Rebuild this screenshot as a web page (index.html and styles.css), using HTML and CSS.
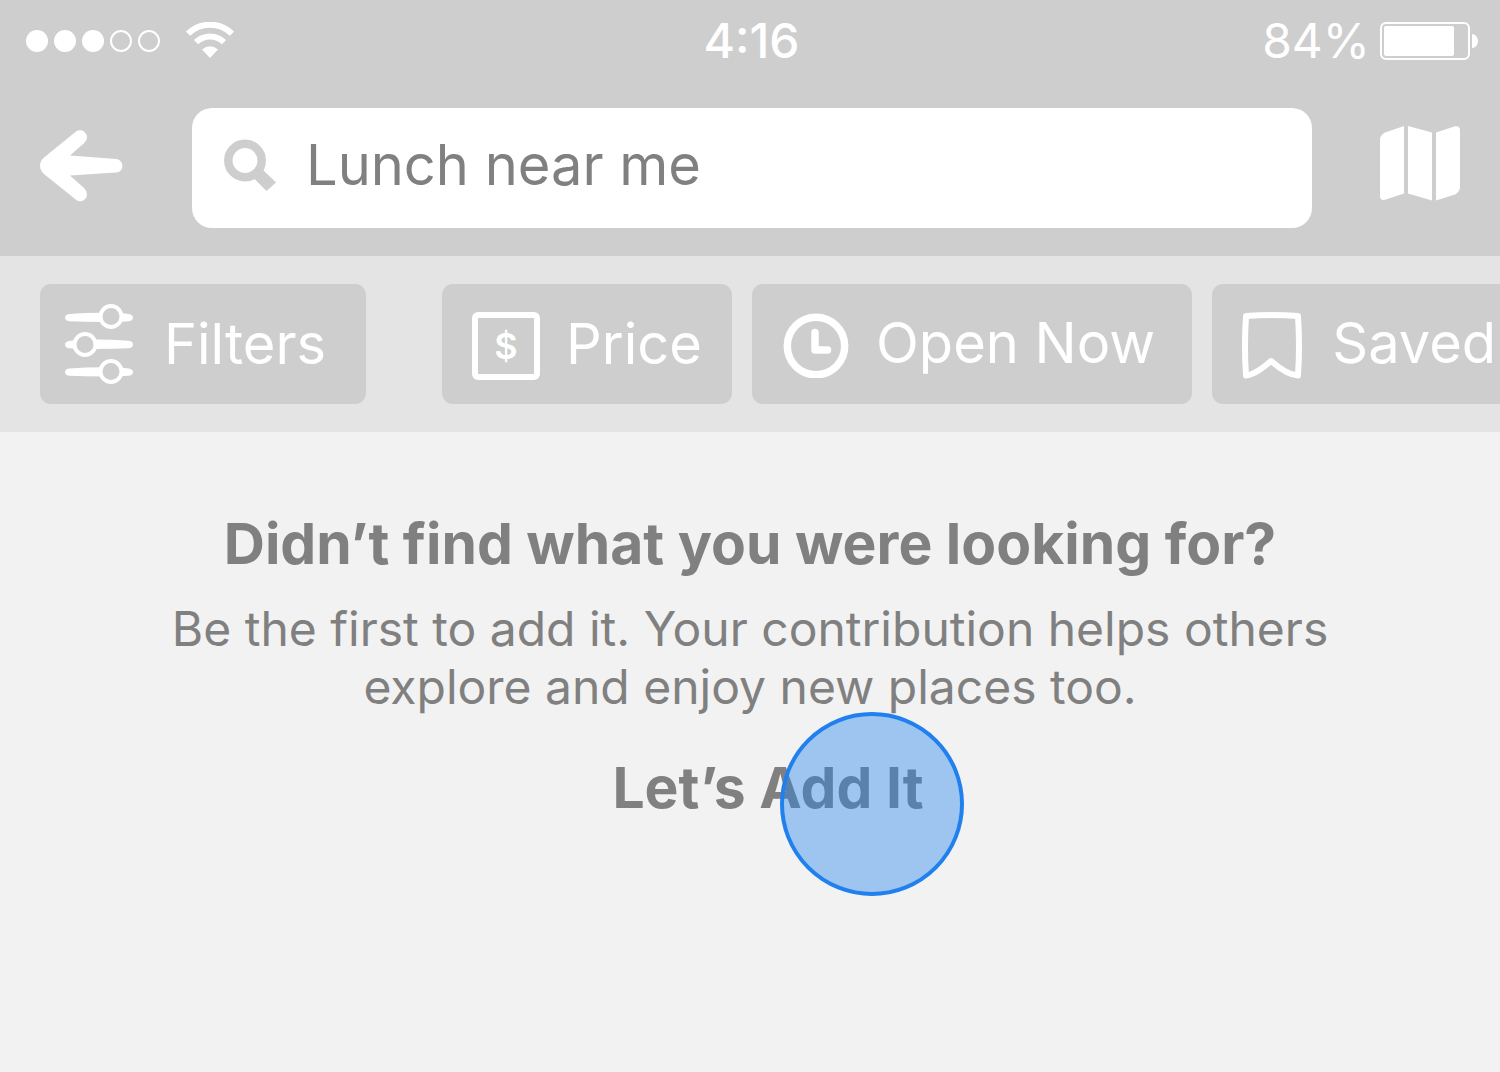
FILE: index.html
```html
<!DOCTYPE html>
<html lang="en">
<head>
<meta charset="utf-8">
<meta name="viewport" content="width=device-width, initial-scale=1">
<title>Lunch near me</title>
<link rel="stylesheet" href="styles.css">
</head>
<body>
<header class="header">
  <div class="status">
    <div class="status-side">
      <svg class="signal" width="136" height="24" viewBox="0 0 136 24" role="img" aria-label="Signal">
        <g fill="#fff"><circle cx="12" cy="12" r="11"/><circle cx="40" cy="12" r="11"/><circle cx="68" cy="12" r="11"/></g>
        <g fill="none" stroke="#fff" stroke-width="2"><circle cx="96" cy="12" r="10"/><circle cx="124" cy="12" r="10"/></g>
      </svg>
      <svg width="48" height="38" viewBox="0 0 48 38" role="img" aria-label="Wi-Fi">
        <g fill="none" stroke="#fff" stroke-width="6">
          <path d="M2 11.700A31.500 31.500 0 0 1 46 11.700"/>
          <path d="M10 20.200A20 20 0 0 1 38 20.200"/>
        </g>
        <path fill="#fff" d="M16 27.500Q24 21 32 27.500L24 36z"/>
      </svg>
    </div>
    <div class="clock">4:16</div>
    <div class="status-side status-end">
      <span>84%</span>
      <svg width="98" height="38" viewBox="0 0 98 38" role="img" aria-label="Battery">
        <rect x="1" y="1" width="88" height="36" rx="5" fill="none" stroke="#fff" stroke-width="2"/>
        <rect x="4" y="4" width="70" height="30" rx="2" fill="#fff"/>
        <path fill="#fff" d="M92 12a6 7 0 0 1 0 14z"/>
      </svg>
    </div>
  </div>
  <div class="nav">
    <button class="icon-button" type="button" aria-label="Back">
      <svg width="84" height="76" viewBox="0 -4 84 76"><path fill="#fff" d="M36 1.500C40-1.500 47 1 47 7.500Q47 10.500 44.500 12.700L30 25.500L76 29C84.500 30 84.500 42 76 42.500L30 45.500L44.500 58.500Q47 61 47 64.500C46.500 71 40 73 36 69.800L4 44Q0 40.500 0 35.500Q0 31 4 27.500z"/></svg>
    </button>
    <label class="search">
      <svg width="52" height="52" viewBox="0 0 52 52" aria-hidden="true"><circle cx="21" cy="21.500" r="16.700" fill="none" stroke="#cecece" stroke-width="8.500"/><path fill="#cecece" d="M39 31L52 43.500L42.500 52L29.500 39z"/></svg>
      <input class="search-input" type="text" value="Lunch near me" aria-label="Search">
    </label>
    <button class="icon-button" type="button" aria-label="Map">
      <svg width="80" height="76" viewBox="0 1 80 76"><path fill="#fff" d="M24 1V68.500L5 74.800Q0 75.500 0 71V15Q0 10 5 7.500zM28 1L52 7.500V75.500L28 68.500zM56 7.500L75 1.300Q80 .5 80 5V62Q80 67 75 69.500L56 75.500z"/></svg>
    </button>
  </div>
</header>
<nav class="chips" aria-label="Filters">
  <button class="chip chip-main" type="button">
    <svg width="68" height="80" viewBox="0 0 68 80" aria-hidden="true">
      <g fill="#fff"><path id="line" d="M4 10Q20 8.700 38 8.700H52L64 10Q68 11 68 13.500Q68 16.500 64 17.300L50 18H38Q20 18 4 17.300Q0 16.500 0 13.500Q0 10.700 4 10z"/><path d="M64 36.700Q48 35.500 30 35.500H16L4 37Q0 38 0 40.500Q0 43.500 4 44.300L18 45H30Q48 45 64 44.300Q68 43.500 68 40.500Q68 37.500 64 36.700z"/><use href="#line" y="54.500"/></g>
      <g fill="#cecece" stroke="#fff" stroke-width="4"><circle cx="46" cy="12.500" r="10.500"/><circle cx="20" cy="40.500" r="10.500"/><circle cx="46" cy="67.500" r="10.500"/></g>
    </svg>
    <span>Filters</span>
  </button>
  <button class="chip chip-price" type="button">
    <span class="price-icon" aria-hidden="true">$</span>
    <span>Price</span>
  </button>
  <button class="chip chip-open" type="button">
    <svg width="68" height="68" viewBox="0 0 68 68" aria-hidden="true"><g fill="none" stroke="#fff"><circle cx="34" cy="36" r="28.700" stroke-width="7.500"/><path d="M33 22.500V40H45.500" stroke-width="7.500" stroke-linecap="round" stroke-linejoin="round"/></g></svg>
    <span class="chip-label">Open Now</span>
  </button>
  <button class="chip chip-saved" type="button">
    <svg width="60" height="72" viewBox="0 -4 60 72" aria-hidden="true"><path fill="none" stroke="#fff" stroke-width="6" stroke-linejoin="round" d="M4 4Q30 2 56 4Q58 34 56 63.500Q45 63 29 49Q13 63 4 63.500Q2 34 4 4z"/></svg>
    <span class="chip-label">Saved</span>
  </button>
</nav>
<main class="empty">
  <h1 class="title">Didn’t find what you were looking for?</h1>
  <p class="text">Be the first to add it. Your contribution helps others explore and enjoy new places too.</p>
  <div class="action">
    <button class="add" type="button">Let’s Add It</button>
    <span class="touch" aria-hidden="true"></span>
  </div>
</main>
</body>
</html>
```
FILE: styles.css
```css
* { box-sizing: border-box; }

body {
  margin: 0;
  min-height: 100vh;
  overflow-x: hidden;
  background: #f2f2f2;
  color: #808080;
  font-family: Inter, "Liberation Sans", sans-serif;
  font-size: 56px;
  line-height: 68px;
}

button, input {
  margin: 0;
  padding: 0;
  border: 0;
  background: none;
  color: inherit;
  font: inherit;
}

svg { display: block; flex: none; }

.header {
  padding-bottom: 28px;
  background: #cecece;
  color: #fff;
}

.status {
  display: grid;
  grid-template-columns: 1fr auto 1fr;
  align-items: center;
  height: 82px;
  padding: 0 22px 0 25px;
  font-size: 48px;
}

.status-side { display: flex; align-items: center; gap: 25px; }
.status-end { justify-content: flex-end; gap: 10px; }
.clock { font-weight: 500; }

.nav {
  display: flex;
  align-items: center;
  padding: 26px 40px 0;
}

.icon-button { padding-bottom: 8px; }

.search {
  display: flex;
  flex: 1;
  align-items: center;
  gap: 30px;
  min-width: 0;
  height: 120px;
  margin: 0 68px;
  padding: 0 32px 6px;
  border-radius: 20px;
  background: #fff;
  color: #808080;
}

.search-input { flex: 1; min-width: 0; height: 68px; outline: 0; }

.chips {
  display: flex;
  gap: 20px;
  padding: 28px 0 28px 40px;
  overflow: hidden;
  background: #e4e4e4;
}

.chip {
  display: flex;
  flex: none;
  align-items: center;
  height: 120px;
  padding: 0 30px;
  border-radius: 11px;
  background: #cecece;
  color: #fff;
  white-space: nowrap;
}

.chip-main { gap: 31px; margin-right: 56px; padding: 0 40px 0 25px; }
.chip-price { gap: 26px; }
.chip-open { gap: 26px; padding-right: 37px; }
.chip-saved { gap: 30px; }
.chip-label { padding-bottom: 3px; }

.price-icon {
  width: 68px;
  height: 68px;
  margin-top: 4px;
  border: 6px solid #fff;
  border-radius: 6px;
  font-size: 36px;
  font-weight: 600;
  line-height: 56px;
  text-align: center;
}

.empty {
  padding: 78px 150px;
  text-align: center;
}

.title { margin: 0 0 22px; font-size: 57px; font-weight: 700; }

.text {
  margin: 0 0 38px;
  font-size: 48px;
  line-height: 58px;
}

.action {
  position: relative;
  width: max-content;
  margin: 0 auto;
  padding-left: 36px;
}

.add { display: block; font-size: 57px; font-weight: 700; }

.touch {
  position: absolute;
  top: -42px;
  right: -40px;
  width: 184px;
  height: 184px;
  border: 4px solid #2080ee;
  border-radius: 50%;
  background: rgba(32, 128, 238, 0.4);
  pointer-events: none;
}
```
